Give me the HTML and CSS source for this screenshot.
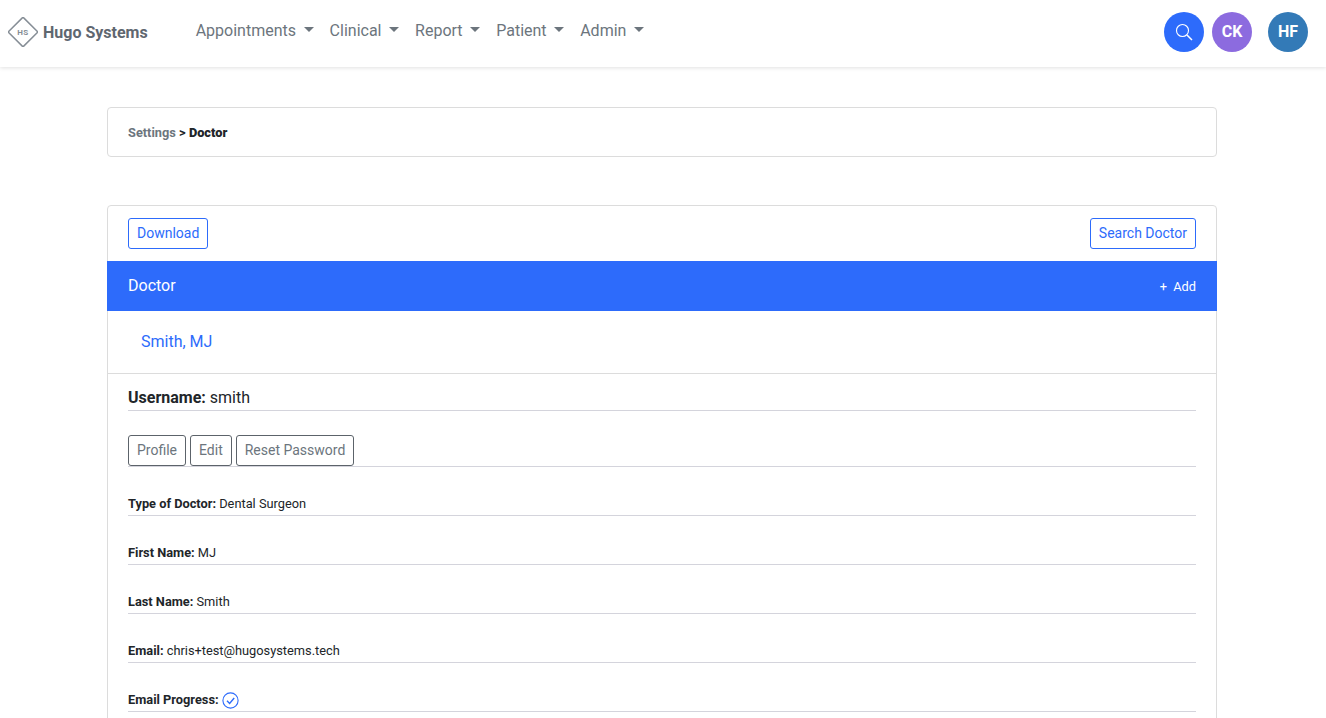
FILE: index.html
```html
<!DOCTYPE html>
<html lang="en">
<head>
  <meta charset="UTF-8" />
  <title>Doctor - Hugo Systems</title>
  <link rel="stylesheet" href="styles.css">
</head>
<body>
  <nav class="navbar">
    <a class="brand" href="#">
      <svg class="brand-logo" width="30" height="30" viewBox="0 0 30 30">
        <rect x="4.5" y="4.5" width="21" height="21" rx="1" transform="rotate(45 15 15)" fill="none" stroke="#868e96" stroke-width="1.5"/>
        <text x="15" y="18" text-anchor="middle" class="brand-mark">HS</text>
      </svg>
      <span>Hugo Systems</span>
    </a>
    <ul class="menu">
      <li><a href="#">Appointments</a></li>
      <li><a href="#">Clinical</a></li>
      <li><a href="#">Report</a></li>
      <li><a href="#">Patient</a></li>
      <li><a href="#">Admin</a></li>
    </ul>
    <div class="nav-right">
      <span class="circle blue">
        <svg width="18" height="18" viewBox="0 0 18 18" fill="none" stroke="#fff" stroke-width="1.1">
          <circle cx="7.5" cy="7.5" r="6"/>
          <path d="M12 12l5 5" stroke-width="1.5"/>
        </svg>
      </span>
      <span class="circle purple">CK</span>
      <span class="circle steel">HF</span>
    </div>
  </nav>

  <div class="container">
    <div class="card crumbs">
      <a href="#">Settings</a> &gt; <b>Doctor</b>
    </div>

    <div class="card main">
      <div class="toolbar">
        <button class="btn btn-blue">Download</button>
        <button class="btn btn-blue">Search Doctor</button>
      </div>
      <div class="band">
        <span class="band-title">Doctor</span>
        <a href="#" class="add"><i>+</i> Add</a>
      </div>
      <div class="doc-name"><a href="#">Smith, MJ</a></div>
      <div class="doc-body">
        <div class="username"><b>Username:</b> smith</div>
        <div class="actions">
          <button class="btn btn-grey">Profile</button>
          <button class="btn btn-grey">Edit</button>
          <button class="btn btn-grey">Reset Password</button>
        </div>
        <div class="field"><b>Type of Doctor:</b> Dental Surgeon</div>
        <div class="field"><b>First Name:</b> MJ</div>
        <div class="field"><b>Last Name:</b> Smith</div>
        <div class="field"><b>Email:</b> chris+test@hugosystems.tech</div>
        <div class="field">
          <b>Email Progress:</b>
          <svg class="check" width="17" height="17" viewBox="0 0 17 17" fill="none" stroke="#2d6bfb">
            <circle cx="8.5" cy="8.5" r="7.6" stroke-width="1.1"/>
            <path d="M5 8.8l2.6 2.6 4.6-5.4" stroke-width="1.4"/>
          </svg>
        </div>
      </div>
    </div>
  </div>
</body>
</html>
```

FILE: styles.css
```css
body {
  font-family: 'Roboto', sans-serif;
  margin: 0;
  background-color: #fff;
  color: #212529;
  height: 718px;
  overflow: hidden;
}
a {
  text-decoration: none;
}
.navbar {
  display: flex;
  align-items: center;
  height: 67px;
  padding: 0 18px 6px 8px;
  box-sizing: border-box;
  background: #fff;
  box-shadow: 0 1px 4px rgba(0, 0, 0, 0.12);
}
.brand {
  display: flex;
  align-items: center;
  gap: 5px;
  color: #5f6770;
  font-size: 16px;
  font-weight: 700;
  margin-top: 4px;
}
.brand-logo {
  margin-top: -2px;
}
.brand-mark {
  font-size: 8px;
  font-weight: 700;
  letter-spacing: 0.5px;
  fill: #868e96;
}
.menu {
  display: flex;
  list-style: none;
  margin: 0 0 0 48px;
  padding: 0;
  gap: 16px;
}
.menu a {
  color: #6c757d;
  font-size: 16px;
}
.menu a::after {
  content: "";
  display: inline-block;
  margin-left: 7.6px;
  vertical-align: 4px;
  border-top: 5px solid #6c757d;
  border-left: 5px solid transparent;
  border-right: 5px solid transparent;
}
.nav-right {
  display: flex;
  margin-left: auto;
  margin-top: 2px;
}
.circle {
  display: flex;
  align-items: center;
  justify-content: center;
  width: 40px;
  height: 40px;
  border-radius: 50%;
  color: #fff;
  font-size: 16px;
  font-weight: 700;
}
.blue {
  background: #2d6bfb;
  margin-right: 8px;
}
.purple {
  background: #8c6bdf;
  margin-right: 16px;
}
.steel {
  background: #337ab7;
}
.container {
  width: 1110px;
  margin: 40px 0 0 107px;
}
.card {
  border: 1px solid #dcdcdc;
  border-radius: 4px;
  background: #fff;
}
.crumbs {
  box-sizing: border-box;
  height: 50px;
  padding: 0 20px;
  line-height: 50px;
  font-size: 12.8px;
  font-weight: 700;
  color: #212529;
}
.crumbs a {
  color: #6c757d;
}
.main {
  margin-top: 48px;
}
.toolbar {
  display: flex;
  justify-content: space-between;
  padding: 12px 20px;
}
.btn {
  font-family: inherit;
  font-size: 14px;
  height: 31px;
  padding: 0 8px 2px;
  background: #fff;
  border-radius: 3px;
}
.btn-blue {
  color: #2d6bfb;
  border: 1px solid #2d6bfb;
}
.btn-grey {
  color: #6c757d;
  border: 1px solid #5c636a;
}
.band {
  display: flex;
  justify-content: space-between;
  align-items: center;
  height: 50px;
  padding: 0 21px;
  background: #2d6bfb;
  color: #fff;
  font-size: 16px;
  margin: 0 -1px;
}
.band-title {
  margin-bottom: 2px;
}
.add {
  color: #fff;
  font-size: 12.8px;
}
.add i {
  font-style: normal;
  margin-right: 3px;
}
.doc-name {
  height: 62px;
  padding: 0 0 2px 33px;
  box-sizing: border-box;
  display: flex;
  align-items: center;
  font-size: 16px;
}
.doc-name a {
  color: #2d6bfb;
}
.doc-body {
  padding: 0 20px 40px;
  border-top: 1px solid #dcdcdc;
}
.username {
  height: 36px;
  line-height: 47px;
  font-size: 16px;
  border-bottom: 1px solid #d4d4dc;
}
.actions {
  display: flex;
  gap: 4px;
  padding-top: 24px;
  border-bottom: 1px solid #d4d4dc;
}
.field {
  height: 48px;
  margin-top: 1px;
  padding-top: 26px;
  box-sizing: border-box;
  line-height: 20px;
  font-size: 12.8px;
  border-bottom: 1px solid #d4d4dc;
}
.check {
  vertical-align: -5px;
}
```
